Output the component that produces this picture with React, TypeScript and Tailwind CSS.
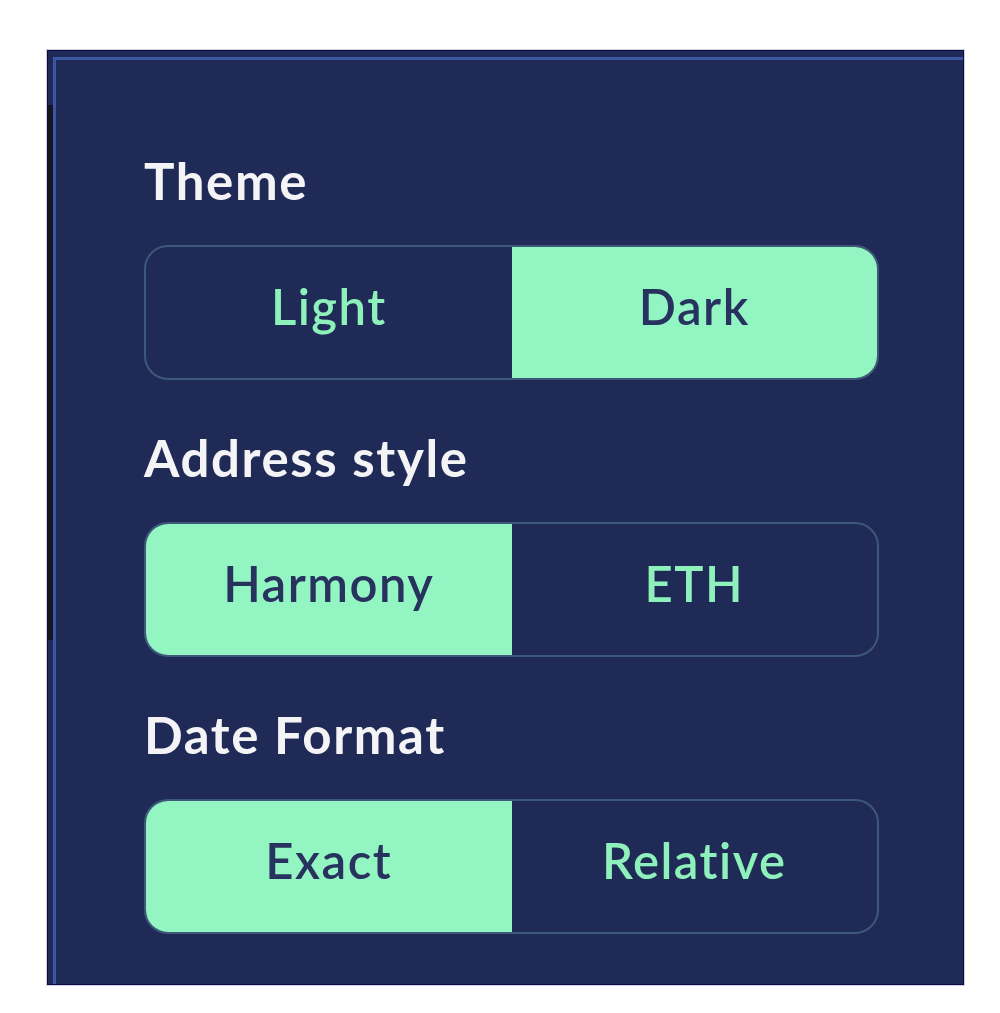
import React from 'react';

type Option = { label: string; active: boolean };

const Section: React.FC<{ title: string; options: Option[]; first?: boolean }> = ({ title, options, first }) => (
  <div className={first ? '' : 'mt-[48px]'}>
    <h2 className="text-[51px] font-bold leading-[60px] tracking-[1.6px] text-[#f4f4f6]">{title}</h2>
    <div className="mt-[34px] flex h-[135px] overflow-hidden rounded-[24px] border-2 border-[#3d5878]">
      {options.map((o) => (
        <button
          key={o.label}
          className={
            o.active
              ? 'flex flex-1 items-center justify-center bg-[#93f5c1] pb-[12px] text-[49px] font-semibold tracking-[1.5px] text-[#28325e]'
              : 'flex flex-1 items-center justify-center pb-[12px] text-[49px] font-semibold tracking-[1.5px] text-[#8ef0bb]'
          }
        >
          {o.label}
        </button>
      ))}
    </div>
  </div>
);

export default function App() {
  return (
    <div
      className="min-h-screen bg-white pl-[47px] pt-[50px]"
      style={{ fontFamily: 'Lato, "Open Sans", sans-serif' }}
    >
      <div className="flex h-[935px] w-[917px] border border-[#0c0c4c] bg-[#1f2a57] outline outline-1 outline-[#d0d0d8]">
        {/* left edge strip */}
        <div className="flex w-[5px] flex-col">
          <div className="h-[54px]" />
          <div className="h-[535px] bg-[#16161f]" />
        </div>
        <div className="mt-[6px] flex-1 border-l-[3px] border-t-[3px] border-[#3c55a5] pl-[88px] pr-[84px] pt-[91px]">
          <Section
            first
            title="Theme"
            options={[
              { label: 'Light', active: false },
              { label: 'Dark', active: true },
            ]}
          />
          <Section
            title="Address style"
            options={[
              { label: 'Harmony', active: true },
              { label: 'ETH', active: false },
            ]}
          />
          <Section
            title="Date Format"
            options={[
              { label: 'Exact', active: true },
              { label: 'Relative', active: false },
            ]}
          />
        </div>
      </div>
    </div>
  );
}
